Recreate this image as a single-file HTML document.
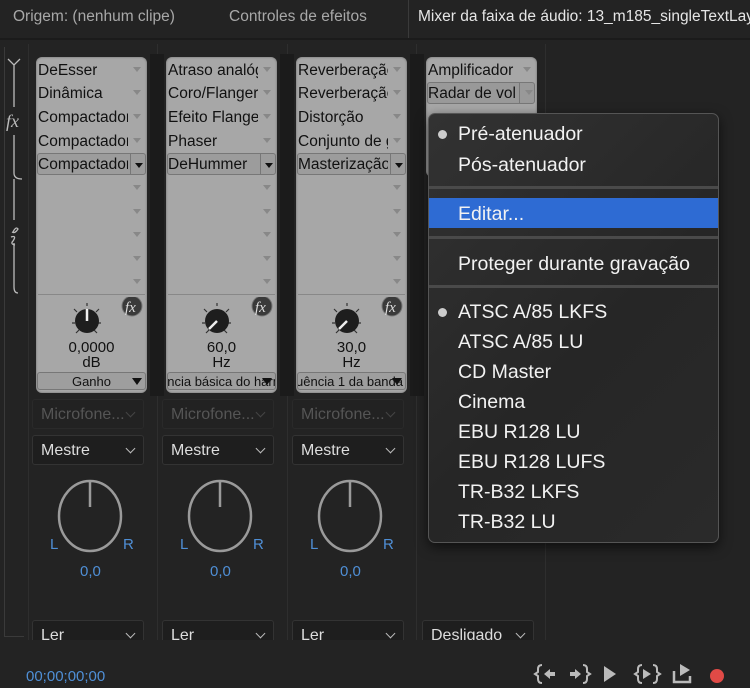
<!DOCTYPE html>
<html><head><meta charset="utf-8">
<style>
*{margin:0;padding:0;box-sizing:border-box}
body{width:750px;height:688px;background:#232323;position:relative;overflow:hidden;font-family:"Liberation Sans",sans-serif}
.a{position:absolute}
.tab{top:8px;font-size:15.5px;color:#a8a8a8;white-space:nowrap}
.box{top:57px;width:111px;height:336px;background:#a7a7a7;border-radius:6px;box-shadow:inset 0 0 2px #666}
.row{position:absolute;left:2px;font-size:15.5px;color:#111;white-space:nowrap;overflow:hidden;height:23px;line-height:23px}
.arr{position:absolute;right:6px;width:0;height:0;border-left:4px solid transparent;border-right:4px solid transparent;border-top:5px solid #888}
.sel{position:absolute;left:1px;width:109px;height:22px;border:1px solid #777;border-radius:3px;background:#9c9c9c}
.dd{border:1px solid #333;border-radius:3px;background:#1e1e1e;color:#ddd;font-size:16px;padding-left:8px;line-height:30px;height:30px;width:112px}
.chev{position:absolute;right:9px;top:9px;width:7px;height:7px;border-right:1.5px solid #bbb;border-bottom:1.5px solid #bbb;transform:rotate(45deg)}
.mi{position:absolute;left:29px;font-size:19.5px;color:#f2f2f2;white-space:nowrap}
.sep{position:absolute;left:0;right:0;height:3px;background:#4a4a4a}
.dot{position:absolute;left:9px;width:9px;height:9px;border-radius:50%;background:#ccc}
.vl{background:#2e2e2e;width:1px}
</style></head><body>
<div class="a tab" style="left:13px">Origem: (nenhum clipe)</div>
<div class="a tab" style="left:229px">Controles de efeitos</div>
<div class="a" style="left:408px;top:0;width:1px;height:38px;background:#3a3a3a"></div>
<div class="a tab" style="left:418px;color:#e6e6e6">Mixer da faixa de áudio: 13_m185_singleTextLayer</div>
<div class="a" style="left:0;top:38px;width:750px;height:2px;background:#1b1b1b"></div>

<div class="a" style="left:4px;top:47px;width:1px;height:590px;background:#3a3a3a"></div>
<div class="a" style="left:4px;top:636px;width:20px;height:1px;background:#3a3a3a"></div>
<svg class="a" style="left:0;top:55px" width="30" height="245"><g stroke="#bbb" stroke-width="1.3" fill="none">
<path d="M8 4 L14 10 L20 4 M14 10 V52 M14 80 V118 M14 118 Q14 124 22 124 M14 124 V165 M14 188 V232 Q14 238 18 238"/>
<path d="M13 177 q3 -6 5 -3 q-3 5 -6 3 M11 182 q6 -2 2 4 q-3 3 2 4"/></g>
<text x="6" y="72" font-family="Liberation Serif" font-style="italic" font-size="18" fill="#bbb">fx</text></svg>

<div class="a vl" style="left:28px;top:44px;height:596px"></div>
<div class="a vl" style="left:157px;top:44px;height:596px"></div>
<div class="a vl" style="left:287px;top:44px;height:596px"></div>
<div class="a vl" style="left:416px;top:44px;height:596px"></div>
<div class="a vl" style="left:545px;top:44px;height:596px"></div>
<div class="a" style="left:150px;top:54px;width:14px;height:342px;background:#1b1b1b"></div>
<div class="a" style="left:280px;top:54px;width:14px;height:342px;background:#1b1b1b"></div>
<div class="a" style="left:410px;top:54px;width:14px;height:342px;background:#1b1b1b"></div>

<div class="a box" style="left:36px">
<div class="row" style="top:2px">DeEsser</div><div class="arr" style="top:10px"></div>
<div class="row" style="top:25px">Dinâmica</div><div class="arr" style="top:33px"></div>
<div class="row" style="top:49px;width:90px">Compactador</div><div class="arr" style="top:57px"></div>
<div class="row" style="top:73px;width:90px">Compactador</div><div class="arr" style="top:81px"></div>
<div class="sel" style="top:96px"></div><div class="row" style="top:96px;width:90px">Compactador</div>
<div class="a" style="left:94px;top:96px;width:16px;height:22px;border-left:1px solid #777"></div><div class="arr" style="top:106px;border-top-color:#111;right:4px"></div>
<div class="arr" style="top:128px"></div><div class="arr" style="top:152px"></div><div class="arr" style="top:175px"></div><div class="arr" style="top:199px"></div><div class="arr" style="top:222px"></div>
<div class="a" style="left:2px;top:237px;width:107px;height:1px;background:#888"></div>
<svg class="a" style="left:30px;top:240px" width="80" height="45"><g stroke="#333" stroke-width="1.2"><path d="M8 12l3 3M33 12l-3 3M6 26h3M32 26h3M10 36l3-3M31 36l-3-3M21 6v3"/></g><circle cx="21" cy="24" r="12" fill="#1e1e1e"/><path d="M21 12v12" stroke="#eee" stroke-width="2.5"/><circle cx="66" cy="9" r="10" fill="#3a3a3a" stroke="#777"/><text x="59" y="15" font-family="Liberation Serif" font-style="italic" font-size="15" fill="#ddd">fx</text></svg>
<div class="a" style="left:0;width:111px;top:283px;text-align:center;font-size:15px;color:#111;line-height:15px">0,0000<br>dB</div>
<div class="a" style="left:1px;top:315px;width:109px;height:18px;border:1px solid #777;border-radius:3px;background:#9e9e9e;font-size:13px;color:#111;text-align:center;line-height:17px">Ganho<div class="arr" style="top:5px;right:3px;border-top-color:#111;border-left-width:5px;border-right-width:5px;border-top-width:7px"></div></div>
</div>

<div class="a box" style="left:166px">
<div class="row" style="top:2px;width:90px">Atraso analógico</div><div class="arr" style="top:10px"></div>
<div class="row" style="top:25px;width:90px">Coro/Flanger</div><div class="arr" style="top:33px"></div>
<div class="row" style="top:49px;width:90px">Efeito Flanger</div><div class="arr" style="top:57px"></div>
<div class="row" style="top:73px">Phaser</div><div class="arr" style="top:81px"></div>
<div class="sel" style="top:96px"></div><div class="row" style="top:96px;width:90px">DeHummer</div>
<div class="a" style="left:94px;top:96px;width:16px;height:22px;border-left:1px solid #777"></div><div class="arr" style="top:106px;border-top-color:#111;right:4px"></div>
<div class="arr" style="top:128px"></div><div class="arr" style="top:152px"></div><div class="arr" style="top:175px"></div><div class="arr" style="top:199px"></div><div class="arr" style="top:222px"></div>
<div class="a" style="left:2px;top:237px;width:107px;height:1px;background:#888"></div>
<svg class="a" style="left:30px;top:240px" width="80" height="45"><g stroke="#333" stroke-width="1.2"><path d="M8 12l3 3M33 12l-3 3M6 26h3M32 26h3M10 36l3-3M31 36l-3-3M21 6v3"/></g><circle cx="21" cy="24" r="12" fill="#1e1e1e"/><path d="M13 32l8-8" stroke="#eee" stroke-width="2.5"/><circle cx="66" cy="9" r="10" fill="#3a3a3a" stroke="#777"/><text x="59" y="15" font-family="Liberation Serif" font-style="italic" font-size="15" fill="#ddd">fx</text></svg>
<div class="a" style="left:0;width:111px;top:283px;text-align:center;font-size:15px;color:#111;line-height:15px">60,0<br>Hz</div>
<div class="a" style="left:1px;top:315px;width:109px;height:18px;border:1px solid #777;border-radius:3px;background:#9e9e9e;font-size:13px;color:#111;line-height:17px;overflow:hidden;white-space:nowrap"><span style="margin-left:-8px">ência básica do harmônico</span><div class="arr" style="top:5px;right:3px;border-top-color:#111;border-left-width:5px;border-right-width:5px;border-top-width:7px"></div></div>
</div>

<div class="a box" style="left:296px">
<div class="row" style="top:2px;width:90px">Reverberação</div><div class="arr" style="top:10px"></div>
<div class="row" style="top:25px;width:90px">Reverberação</div><div class="arr" style="top:33px"></div>
<div class="row" style="top:49px;width:90px">Distorção</div><div class="arr" style="top:57px"></div>
<div class="row" style="top:73px;width:90px">Conjunto de graves</div><div class="arr" style="top:81px"></div>
<div class="sel" style="top:96px"></div><div class="row" style="top:96px;width:90px">Masterização</div>
<div class="a" style="left:94px;top:96px;width:16px;height:22px;border-left:1px solid #777"></div><div class="arr" style="top:106px;border-top-color:#111;right:4px"></div>
<div class="arr" style="top:128px"></div><div class="arr" style="top:152px"></div><div class="arr" style="top:175px"></div><div class="arr" style="top:199px"></div><div class="arr" style="top:222px"></div>
<div class="a" style="left:2px;top:237px;width:107px;height:1px;background:#888"></div>
<svg class="a" style="left:30px;top:240px" width="80" height="45"><g stroke="#333" stroke-width="1.2"><path d="M8 12l3 3M33 12l-3 3M6 26h3M32 26h3M10 36l3-3M31 36l-3-3M21 6v3"/></g><circle cx="21" cy="24" r="12" fill="#1e1e1e"/><path d="M13 32l8-8" stroke="#eee" stroke-width="2.5"/><circle cx="66" cy="9" r="10" fill="#3a3a3a" stroke="#777"/><text x="59" y="15" font-family="Liberation Serif" font-style="italic" font-size="15" fill="#ddd">fx</text></svg>
<div class="a" style="left:0;width:111px;top:283px;text-align:center;font-size:15px;color:#111;line-height:15px">30,0<br>Hz</div>
<div class="a" style="left:1px;top:315px;width:109px;height:18px;border:1px solid #777;border-radius:3px;background:#9e9e9e;font-size:13px;color:#111;line-height:17px;overflow:hidden;white-space:nowrap"><span style="margin-left:-2px">uência 1 da banda de</span><div class="arr" style="top:5px;right:3px;border-top-color:#111;border-left-width:5px;border-right-width:5px;border-top-width:7px"></div></div>
</div>

<div class="a box" style="left:426px;height:120px">
<div class="row" style="top:2px;width:90px">Amplificador</div><div class="arr" style="top:10px"></div>
<div class="sel" style="top:25px;width:108px;background:#999"></div><div class="row" style="top:25px;width:88px">Radar de volume</div>
<div class="a" style="left:93px;top:25px;width:16px;height:22px;border-left:1px solid #777"></div><div class="arr" style="top:33px;right:4px"></div>
</div>

<div class="a dd" style="left:32px;top:399px;color:#555;background:#222;border-color:#2a2a2a">Microfone...<div class="chev" style="border-color:#444"></div></div>
<div class="a dd" style="left:162px;top:399px;color:#555;background:#222;border-color:#2a2a2a">Microfone...<div class="chev" style="border-color:#444"></div></div>
<div class="a dd" style="left:292px;top:399px;color:#555;background:#222;border-color:#2a2a2a">Microfone...<div class="chev" style="border-color:#444"></div></div>
<div class="a dd" style="left:32px;top:435px">Mestre<div class="chev"></div></div>
<div class="a dd" style="left:162px;top:435px">Mestre<div class="chev"></div></div>
<div class="a dd" style="left:292px;top:435px">Mestre<div class="chev"></div></div>

<svg class="a" style="left:40px;top:472px" width="380" height="112"><g fill="none" stroke="#9a9a9a" stroke-width="2.5">
<ellipse cx="50" cy="44" rx="31" ry="35"/><path d="M50 9v26"/>
<ellipse cx="180" cy="44" rx="31" ry="35"/><path d="M180 9v26"/>
<ellipse cx="310" cy="44" rx="31" ry="35"/><path d="M310 9v26"/></g>
<g font-family="Liberation Sans" font-size="15" fill="#4f8fd6">
<text x="10" y="77">L</text><text x="83" y="77">R</text><text x="40" y="104">0,0</text>
<text x="140" y="77">L</text><text x="213" y="77">R</text><text x="170" y="104">0,0</text>
<text x="270" y="77">L</text><text x="343" y="77">R</text><text x="300" y="104">0,0</text></g></svg>

<div class="a dd" style="left:32px;top:620px">Ler<div class="chev"></div></div>
<div class="a dd" style="left:162px;top:620px">Ler<div class="chev"></div></div>
<div class="a dd" style="left:292px;top:620px">Ler<div class="chev"></div></div>
<div class="a dd" style="left:422px;top:620px">Desligado<div class="chev"></div></div>
<div class="a" style="left:24px;top:640px;width:726px;height:48px;background:#232323"></div>
<div class="a" style="left:0;top:640px;width:24px;height:48px;background:#232323"></div>
<div class="a" style="left:4px;top:636px;width:20px;height:1px;background:#3a3a3a"></div>

<div class="a" style="left:26px;top:668px;font-size:15px;color:#4f8fd6">00;00;00;00</div>
<svg class="a" style="left:530px;top:660px" width="220" height="28"><g fill="#bbb" stroke="#bbb">
<path d="M12 5q-4 0-4 4v3l-3 2 3 2v3q0 4 4 4" fill="none" stroke-width="2"/><path d="M14 14l6-5v3h5v4h-5v3z" stroke="none"/>
<path d="M40 12h5v-3l6 5-6 5v-3h-5z" stroke="none"/><path d="M53 5q4 0 4 4v3l3 2-3 2v3q0 4-4 4" fill="none" stroke-width="2"/>
<path d="M74 6l12 8-12 8z" stroke="none"/>
<path d="M112 5q-4 0-4 4v3l-3 2 3 2v3q0 4 4 4M123 5q4 0 4 4v3l3 2-3 2v3q0 4-4 4" fill="none" stroke-width="2"/><path d="M113 9l8 5-8 5z" stroke="none"/>
<path d="M144 11v11h16v-6" fill="none" stroke-width="2.5"/><path d="M150 4l10 6-10 6z" stroke="none"/>
</g><circle cx="187" cy="16" r="7" fill="#e04a46"/></svg>

<div class="a" style="left:428px;top:113px;width:291px;height:430px;border-radius:7px;background:linear-gradient(135deg,#323232,#262626 55%,#2a2a2a);border:1px solid #555;box-shadow:0 4px 12px rgba(0,0,0,.6)">
<div class="dot" style="top:16px"></div><div class="mi" style="top:9px">Pré-atenuador</div>
<div class="mi" style="top:40px">Pós-atenuador</div>
<div class="sep" style="top:72px"></div>
<div class="a" style="left:0;right:0;top:84px;height:30px;background:#2e6bd3"></div>
<div class="mi" style="top:89px">Editar...</div>
<div class="sep" style="top:122px"></div>
<div class="mi" style="top:139px">Proteger durante gravação</div>
<div class="sep" style="top:171px"></div>
<div class="dot" style="top:194px"></div><div class="mi" style="top:187px">ATSC A/85 LKFS</div>
<div class="mi" style="top:217px">ATSC A/85 LU</div>
<div class="mi" style="top:247px">CD Master</div>
<div class="mi" style="top:277px">Cinema</div>
<div class="mi" style="top:307px">EBU R128 LU</div>
<div class="mi" style="top:337px">EBU R128 LUFS</div>
<div class="mi" style="top:367px">TR-B32 LKFS</div>
<div class="mi" style="top:397px">TR-B32 LU</div>
</div>
</body></html>
